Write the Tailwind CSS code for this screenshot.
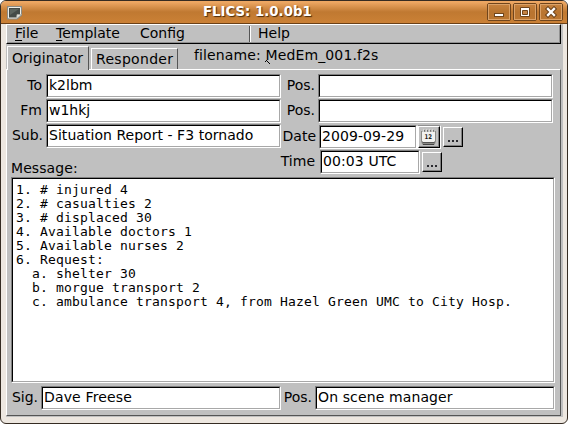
<!DOCTYPE html>
<html lang="en">
<head>
<meta charset="utf-8">
<title>FLICS: 1.0.0b1</title>
<script src="https://cdn.jsdelivr.net/npm/@tailwindcss/browser@4"></script>
</head>
<body class="w-[568px] h-[424px] overflow-hidden bg-white font-['DejaVu_Sans',sans-serif] text-[14px] text-black">
<div class="w-[568px] h-[424px] rounded-[6px] overflow-hidden border border-[#352b22] bg-[#ede7e0] flex flex-col">
  <!-- title bar -->
  <header class="h-[23px] shrink-0 flex items-start pl-[6px] pr-[4px] pt-[2px] border-b border-[#6b4016] bg-linear-to-b from-[#eda763] from-5% via-[#c07931] via-50% to-[#cb8136]">
    <svg class="shrink-0 mt-[3px] w-[16px] h-[14px]" viewBox="0 0 16 14"><path d="M1 1h13v8l-4 3.500H1z" fill="#454b47" stroke="#8b8b84" stroke-width="2"/><path d="M1.500 1.500h12v7l-3.500 3.500h-8.500z" fill="#454b47" stroke="#eeeee8"/><path d="M3 3h9L3 9z" fill="#5d655f"/><path d="M9.500 12.500l.5-4h4.500z" fill="#e8e8e2" stroke="#b0b0a8" stroke-width=".7"/></svg>
    <h1 class="w-[280px] ml-[180px] whitespace-nowrap text-[13.3px] leading-[18px] font-bold text-white [text-shadow:1px_1px_1px_#4a2b0c]">FLICS: 1.0.0b1</h1>
    <div class="ml-auto shrink-0 flex gap-[2px]">
      <svg class="w-[24px] h-[18px]" viewBox="0 0 24 18"><rect x=".5" y=".5" width="23" height="17" rx="1.5" fill="#b4722f" fill-opacity=".6" stroke="#70451c"/><rect x="1.5" y="1.5" width="21" height="15" fill="none" stroke="#dca268"/><rect x="7.5" y="10.500" width="9" height="3" fill="#fff" stroke="#70451c"/></svg>
      <svg class="w-[24px] h-[18px]" viewBox="0 0 24 18"><rect x=".5" y=".5" width="23" height="17" rx="1.5" fill="#b4722f" fill-opacity=".6" stroke="#70451c"/><rect x="1.5" y="1.5" width="21" height="15" fill="none" stroke="#dca268"/><path d="M7.500 4.500h9v9h-9z" fill="#fff" stroke="#70451c"/><path d="M9.500 7.500h5v4h-5z" fill="#c58344" stroke="#70451c"/></svg>
      <svg class="w-[24px] h-[18px]" viewBox="0 0 24 18"><rect x=".5" y=".5" width="23" height="17" rx="1.5" fill="#b4722f" fill-opacity=".6" stroke="#70451c"/><rect x="1.5" y="1.500" width="21" height="15" fill="none" stroke="#dca268"/><path d="M9 6l6 6M15 6l-6 6" stroke="#70451c" stroke-width="4.500" stroke-linecap="square"/><path d="M9 6l6 6M15 6l-6 6" stroke="#fff" stroke-width="2.300" stroke-linecap="square"/></svg>
    </div>
  </header>

  <main class="ml-[5px] w-[557px] h-[393px] bg-[#c0c0c0] flex flex-col">
    <!-- menu bar -->
    <nav class="w-[555px] h-[20px] shrink-0 border-t border-l border-t-white border-l-white border-b border-r border-b-black border-r-black">
      <div class="h-[18px] flex border-b border-r border-[#909090] leading-[17px]">
        <span class="ml-[8px] w-[41px] whitespace-nowrap"><u class="underline-offset-2">F</u>ile</span>
        <span class="w-[84px] whitespace-nowrap"><u class="underline-offset-2">T</u>emplate</span>
        <span class="w-[109px] whitespace-nowrap">Config</span>
        <span class="w-[2px] h-[16px] mt-px border-l border-r border-l-[#555] border-r-white"></span>
        <span class="ml-[7px]">Help</span>
      </div>
    </nav>

    <!-- tabs -->
    <div class="h-[25px] shrink-0 flex items-end">
      <div class="relative ml-px w-[82px] h-[24px] -mb-px border-t border-l border-r border-t-white border-l-white border-r-[#555] bg-[#c0c0c0] pl-[4px] pt-[2px] leading-[18px] whitespace-nowrap tracking-[0.04px]">Originator</div>
      <div class="ml-[2px] w-[87px] h-[21px] border-t border-l border-r border-t-white border-l-white border-r-[#555] pl-[4px] pt-px leading-[19px] whitespace-nowrap tracking-[0.3px]">Responder</div>
      <div class="self-start relative ml-[16px] mt-[2px] leading-[18px] whitespace-nowrap tracking-[0.13px]">filename: MedEm_001.f2s
        <svg class="absolute left-[71px] top-[14px] w-[5px] h-[4px]" viewBox="0 0 5 4"><path d="M0 1h1V0h1v1h1v1h1v1h1v1H4V3H3V2H2V1H1v1H0z" fill="#000"/></svg>
      </div>
    </div>

    <section class="w-[555px] h-[347px] shrink-0 border-t border-l border-r border-b border-t-white border-l-white border-r-[#555] border-b-[#555] pl-[4px] pt-[4px]">
      <div class="flex h-[103px]">
        <div class="w-[270px] shrink-0 flex flex-col gap-px">
          <div class="flex"><span class="w-[32px] mr-[3px] pr-px pt-[2px] leading-[18px] text-right whitespace-nowrap">To</span><div class="w-[235px] h-[24px] border border-t-[#808080] border-l-[#808080] border-b-white border-r-white"><div class="h-[22px] bg-white border border-t-black border-l-black border-b-[#a8a8a8] border-r-[#a8a8a8] pl-px leading-[18px]">k2lbm</div></div></div>
          <div class="flex"><span class="w-[32px] mr-[3px] pr-px pt-[2px] leading-[18px] text-right whitespace-nowrap">Fm</span><div class="w-[235px] h-[24px] border border-t-[#808080] border-l-[#808080] border-b-white border-r-white"><div class="h-[22px] bg-white border border-t-black border-l-black border-b-[#a8a8a8] border-r-[#a8a8a8] pl-px leading-[18px]">w1hkj</div></div></div>
          <div class="flex"><span class="w-[32px] mr-[3px] pt-[2px] leading-[18px] text-right whitespace-nowrap">Sub.</span><div class="w-[235px] h-[24px] border border-t-[#808080] border-l-[#808080] border-b-white border-r-white"><div class="h-[22px] bg-white border border-t-black border-l-black border-b-[#a8a8a8] border-r-[#a8a8a8] pl-px leading-[18px] whitespace-nowrap tracking-[0.04px]">Situation Report - F3 tornado</div></div></div>
          <div class="pt-[10px] leading-[18px] tracking-[0.08px]">Message:</div>
        </div>
        <div class="w-[272px] shrink-0 flex flex-col gap-px">
          <div class="flex"><span class="w-[34px] mr-[3px] pt-[2px] leading-[18px] text-right whitespace-nowrap">Pos.</span><div class="w-[235px] h-[24px] border border-t-[#808080] border-l-[#808080] border-b-white border-r-white"><div class="h-[22px] bg-white border border-t-black border-l-black border-b-[#a8a8a8] border-r-[#a8a8a8]"></div></div></div>
          <div class="flex"><span class="w-[34px] mr-[3px] pt-[2px] leading-[18px] text-right whitespace-nowrap">Pos.</span><div class="w-[235px] h-[24px] border border-t-[#808080] border-l-[#808080] border-b-white border-r-white"><div class="h-[22px] bg-white border border-t-black border-l-black border-b-[#a8a8a8] border-r-[#a8a8a8]"></div></div></div>
          <div class="flex mt-px">
            <span class="w-[35px] mr-[3px] pt-[2px] leading-[18px] flex justify-end whitespace-nowrap">Date</span>
            <div class="w-[98px] h-[24px] border border-t-[#808080] border-l-[#808080] border-b-white border-r-white"><div class="h-[22px] bg-white border border-t-black border-l-black border-b-[#a8a8a8] border-r-[#a8a8a8] pl-px leading-[18px] whitespace-nowrap tracking-[0.08px]">2009-09-29</div></div>
            <div class="w-[24px] h-[24px] border border-t-[#909090] border-l-white border-b-white border-r-white"><div class="w-[22px] h-[22px] border border-t-white border-l-white border-b-black border-r-black"><div class="w-[20px] h-[20px] border-b border-r border-[#808080] bg-[#c0c0c0] pl-[2px] pt-[2px]">
              <svg class="w-[15px] h-[16px]" viewBox="0 0 15 16"><path d="M0 2h15v10l-1 3-1 1H2l-1-1-1-3z" fill="#8a8a86"/><path d="M2 15.500h11" stroke="#444"/><path d="M1.500 13.500h12" stroke="#555"/><path d="M1 2.500h13v9l-1 1.500H2l-1-1.500z" fill="#f2f2f0"/><path d="M2 1.500h11" stroke="#666" stroke-width="1" stroke-dasharray="2 1"/><path d="M2.500 0v3M5.500 0v3M8.500 0v3M11.500 0v3" stroke="#d8d8d4"/><path d="M3.500 1v2M6.500 1v2M9.500 1v2M12.500 1v2" stroke="#777" stroke-width=".8"/><text x="3.500" y="9.500" font-size="6.500" font-weight="bold" font-family="DejaVu Sans" fill="#222" textLength="7.500" lengthAdjust="spacingAndGlyphs">12</text></svg>
            </div></div></div>
            <div class="ml-[2px] mt-[2px] w-[20px] h-[20px] border border-t-white border-l-white border-b-black border-r-black"><div class="h-[18px] border-b border-r border-[#808080] pl-[4px] pt-[12px] flex gap-[2px]"><i class="w-[2px] h-[2px] bg-[#2b2b30]"></i><i class="w-[2px] h-[2px] bg-[#2b2b30]"></i><i class="w-[2px] h-[2px] bg-[#2b2b30]"></i></div></div>
          </div>
          <div class="flex">
            <span class="w-[36px] mr-[3px] pr-[2px] pt-[2px] leading-[18px] flex justify-end whitespace-nowrap">Time</span>
            <div class="w-[100px] h-[24px] border border-t-[#808080] border-l-[#808080] border-b-white border-r-white"><div class="h-[22px] bg-white border border-t-black border-l-black border-b-[#a8a8a8] border-r-[#a8a8a8] pl-px leading-[18px] whitespace-nowrap tracking-[0.1px]">00:03 UTC</div></div>
            <div class="ml-[2px] mt-[2px] w-[20px] h-[20px] border border-t-white border-l-white border-b-black border-r-black"><div class="h-[18px] border-b border-r border-[#808080] pl-[4px] pt-[12px] flex gap-[2px]"><i class="w-[2px] h-[2px] bg-[#2b2b30]"></i><i class="w-[2px] h-[2px] bg-[#2b2b30]"></i><i class="w-[2px] h-[2px] bg-[#2b2b30]"></i></div></div>
          </div>
        </div>
      </div>

      <!-- message body -->
      <div class="w-[544px] h-[206px] border border-t-[#808080] border-l-[#808080] border-b-white border-r-white"><pre class="h-[204px] bg-white border border-t-black border-l-black border-b-[#a8a8a8] border-r-[#a8a8a8] pl-[3px] pt-[4px] font-['DejaVu_Sans_Mono',monospace] text-[13px] leading-[14px] tracking-[0.174px]">1. # injured 4
2. # casualties 2
3. # displaced 30
4. Available doctors 1
5. Available nurses 2
6. Request:
  a. shelter 30
  b. morgue transport 2
  c. ambulance transport 4, from Hazel Green UMC to City Hosp.</pre></div>

      <div class="mt-[3px] flex">
        <span class="w-[27px] mr-[3px] pt-[2px] leading-[18px] flex justify-end whitespace-nowrap">Sig.</span>
        <div class="w-[240px] h-[24px] border border-t-[#808080] border-l-[#808080] border-b-white border-r-white"><div class="h-[22px] bg-white border border-t-black border-l-black border-b-[#a8a8a8] border-r-[#a8a8a8] pl-px leading-[18px] tracking-[0.16px]">Dave Freese</div></div>
        <span class="w-[31px] mr-[3px] pt-[2px] leading-[18px] flex justify-end whitespace-nowrap">Pos.</span>
        <div class="w-[240px] h-[24px] border border-t-[#808080] border-l-[#808080] border-b-white border-r-white"><div class="h-[22px] bg-white border border-t-black border-l-black border-b-[#a8a8a8] border-r-[#a8a8a8] pl-px leading-[18px] tracking-[0.12px]">On scene manager</div></div>
      </div>
    </section>
  </main>
</div>
</body>
</html>
